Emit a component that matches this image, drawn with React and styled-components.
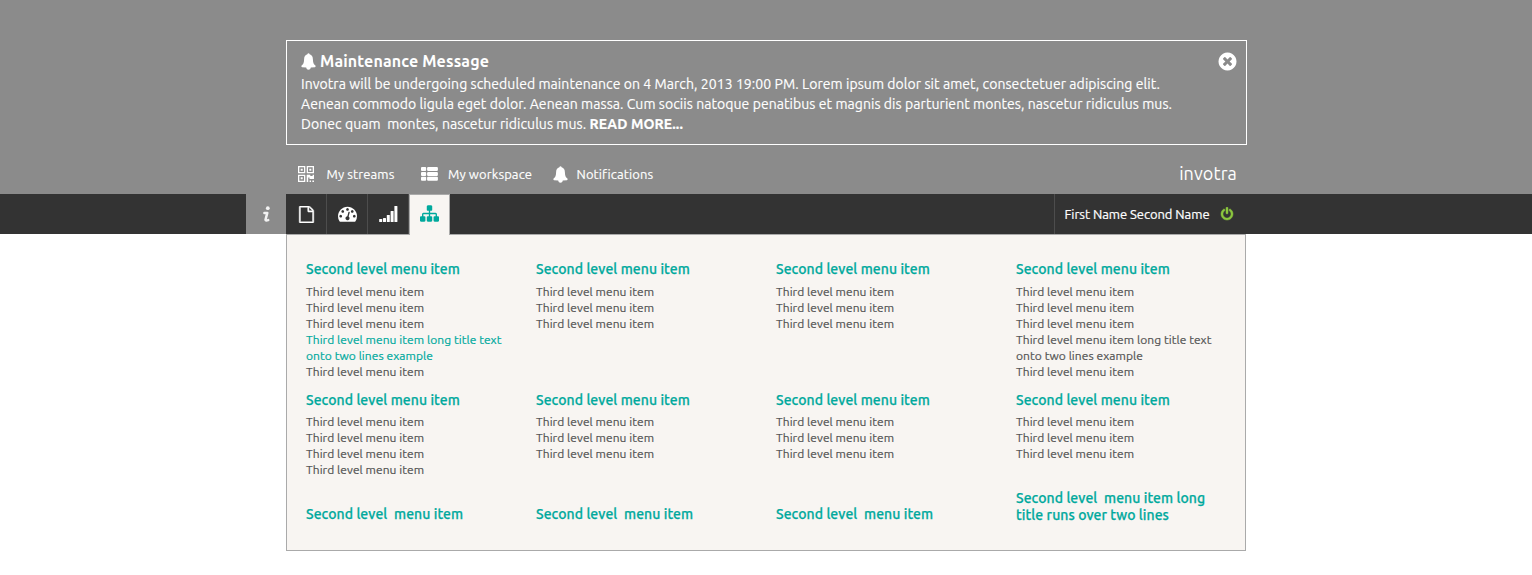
import React from "react";
import styled, { createGlobalStyle } from "styled-components";

const GlobalStyle = createGlobalStyle`
  * { box-sizing: border-box; }
  body { margin: 0; background: #fff; font-family: Ubuntu, "Noto Sans", sans-serif; }
  h2, h3, p, ul { margin: 0; padding: 0; font-weight: normal; }
  button { border: 0; padding: 0; background: none; color: inherit; font: inherit; }
`;

const Header = styled.header`
  height: 194px;
  padding-top: 40px;
  background: #8b8b8b;
  color: #fff;
`;
const Container = styled.div`
  width: 961px;
  margin-left: 286px;
`;
const Message = styled.section`
  display: flex;
  justify-content: space-between;
  height: 105px;
  padding: 10px 8px 0 14px;
  border: 1px solid #fff;
`;
const MessageTitle = styled.h2`
  display: flex;
  align-items: center;
  gap: 4px;
  height: 20px;
  margin-bottom: 3px;
  font-size: 16px;
  font-weight: 700;
  white-space: nowrap;
  letter-spacing: 0.14px;
`;
const MessageLine = styled.p`
  height: 20px;
  font-size: 14px;
  line-height: 20px;
  white-space: pre;
  letter-spacing: 0.065px;
  -webkit-text-stroke: 0.15px;
`;
const ReadMore = styled.strong`
  font-weight: 700;
  letter-spacing: 0.1px;
`;
const Close = styled.button`
  display: flex;
  align-self: flex-start;
`;
const QuickLinks = styled.nav`
  display: flex;
  align-items: center;
  height: 49px;
  padding: 9px 10px 0 12px;
`;
const QuickLink = styled.a`
  display: flex;
  align-items: center;
  gap: ${(p) => p.$gap}px;
  width: ${(p) => p.$width}px;
  font-size: 13px;
  line-height: 20px;
  white-space: nowrap;
  letter-spacing: 0.1px;
  -webkit-text-stroke: 0.15px;
`;
const Brand = styled.span`
  margin: -3px 0 0 auto;
  font-size: 18px;
  line-height: 20px;
  letter-spacing: 0.12px;
`;

const NavBar = styled.div`
  display: flex;
  height: 40px;
  padding-left: 246px;
  background: #333;
  color: #fff;
`;
const InfoTab = styled.button`
  display: flex;
  align-items: center;
  justify-content: center;
  width: 40px;
  background: #8b8b8b;
  color: #f2f2f2;
`;
const Tab = styled.button`
  display: flex;
  align-items: center;
  justify-content: center;
  width: 41px;
  height: ${(p) => (p.$active ? 41 : 40)}px;
  padding-bottom: ${(p) => p.$lift || 0}px;
  border-right: 1px solid ${(p) => (p.$active ? "#aaa" : "#4d4d4d")};
  ${(p) => p.$active && `
    position: relative;
    background: #f8f5f2;
    color: #00a99d;
    border-left: 1px solid #aaa;
    border-top: 1px solid #aaa;
  `}
`;
const User = styled.div`
  display: flex;
  align-items: center;
  justify-content: space-between;
  width: 192px;
  margin-left: 604px;
  padding: 0 12px 0 9.5px;
  border-left: 1px solid #4d4d4d;
  font-size: 13px;
  white-space: nowrap;
  letter-spacing: -0.04px;
  -webkit-text-stroke: 0.2px;
  svg { color: #8cc63f; }
`;

const Panel = styled.main`
  display: grid;
  grid-template-columns: 230px 240px 240px 229px;
  grid-template-rows: 131px 98px 59px;
  width: 960px;
  height: 317px;
  margin-left: 286px;
  padding: 26px 0 0 19px;
  border: 1px solid #aaa;
  background: #f8f5f2;
`;
const Group = styled.section`
  align-self: ${(p) => (p.$bottom ? "end" : "start")};
  padding-bottom: ${(p) => p.$bottom || 0}px;
`;
const GroupTitle = styled.h3`
  color: #00a99d;
  font-size: 14px;
  font-weight: 500;
  line-height: 17px;
  white-space: pre;
  letter-spacing: 0.07px;
  -webkit-text-stroke: 0.25px;
`;
const Items = styled.ul`
  list-style: none;
  padding-top: ${(p) => p.$top}px;
`;
const Item = styled.li`
  color: ${(p) => (p.$active ? "#00a99d" : "#555")};
  font-size: 12px;
  line-height: 16px;
  white-space: pre;
  letter-spacing: 0.06px;
  -webkit-text-stroke: 0.2px;
`;

const Fa = ({ size, d, stroke = 0 }) => (
  <svg width={size} height={size} viewBox="0 0 1792 1792" fill="currentColor" stroke="currentColor" strokeWidth={stroke}><path d={d} /></svg>
);
const POWER = "M1664 896q0 156-61 298t-164 245-245 164-298 61-298-61-245-164-164-245-61-298q0-182 80.5-343t226.5-270q43-32 95.5-25t83.5 50q32 42 24.5 94.5t-49.5 84.5q-98 74-151.5 181t-53.5 228q0 104 40.5 198.5t109.5 163.5 163.5 109.5 198.5 40.5 198.5-40.5 163.5-109.5 109.5-163.5 40.5-198.5q0-121-53.5-228t-151.5-181q-42-32-49.5-84.5t24.5-94.5q31-43 84-50t95 25q146 109 226.5 270t80.5 343zm-640-768v640q0 52-38 90t-90 38-90-38-38-90v-640q0-52 38-90t90-38 90 38 38 90z";
const CLOSE = "M1277 1122q0-26-19-45l-181-181 181-181q19-19 19-45 0-27-19-46l-90-90q-19-19-46-19-26 0-45 19l-181 181-181-181q-19-19-45-19-27 0-46 19l-90 90q-19 19-19 46 0 26 19 45l181 181-181 181q-19 19-19 45 0 27 19 46l90 90q19 19 46 19 26 0 45-19l181-181 181 181q19 19 45 19 27 0 46-19l90-90q19-19 19-46zm387-226q0 209-103 385.5t-279.5 279.5-385.5 103-385.5-103-279.5-279.5-103-385.5 103-385.5 279.5-279.5 385.5-103 385.5 103 279.5 279.5 103 385.5z";
const SITEMAP = "M1792 1248v320q0 40-28 68t-68 28h-320q-40 0-68-28t-28-68v-320q0-40 28-68t68-28h96v-192h-512v192h96q40 0 68 28t28 68v320q0 40-28 68t-68 28h-320q-40 0-68-28t-28-68v-320q0-40 28-68t68-28h96v-192h-512v192h96q40 0 68 28t28 68v320q0 40-28 68t-68 28h-320q-40 0-68-28t-28-68v-320q0-40 28-68t68-28h96v-192q0-52 38-90t90-38h512v-192h-96q-40 0-68-28t-28-68v-320q0-40 28-68t68-28h320q40 0 68 28t28 68v320q0 40-28 68t-68 28h-96v192h512q52 0 90 38t38 90v192h96q40 0 68 28t28 68z";
const GAUGE = "M384 1152q0-53-37.5-90.5t-90.5-37.5-90.5 37.5-37.5 90.5 37.5 90.5 90.5 37.5 90.5-37.5 37.5-90.5zm192-448q0-53-37.5-90.5t-90.5-37.5-90.5 37.5-37.5 90.5 37.5 90.5 90.5 37.5 90.5-37.5 37.5-90.5zm428 481l101-382q6-26-7.5-48.5t-38.5-29.5-48 6.5-30 39.5l-101 382q-60 5-107 43.5t-63 98.5q-20 77 20 146t117 89 146-20 89-117q16-60-6-117t-72-91zm660-33q0-53-37.5-90.5t-90.5-37.5-90.5 37.5-37.5 90.5 37.5 90.5 90.5 37.5 90.5-37.5 37.5-90.5zm-640-640q0-53-37.5-90.5t-90.5-37.5-90.5 37.5-37.5 90.5 37.5 90.5 90.5 37.5 90.5-37.5 37.5-90.5zm448 192q0-53-37.5-90.5t-90.5-37.5-90.5 37.5-37.5 90.5 37.5 90.5 90.5 37.5 90.5-37.5 37.5-90.5zm320 448q0 261-141 483-19 29-54 29h-1402q-35 0-54-29-141-221-141-483 0-182 71-348t191-286 286-191 348-71 348 71 286 191 191 286 71 348z";
const FILE = "M1596 380q28 28 48 76t20 88v1152q0 40-28 68t-68 28h-1344q-40 0-68-28t-28-68v-1600q0-40 28-68t68-28h896q40 0 88 20t76 48zm-444-244v376h376q-10-29-22-41l-313-313q-12-12-41-22zm384 1528v-1024h-416q-40 0-68-28t-28-68v-416h-768v1536h1280z";

const InfoIcon = () => (
  <svg width="7" height="17" viewBox="0 0 7 17" fill="none" stroke="currentColor" strokeLinecap="round" strokeLinejoin="round">
    <circle cx="4.8" cy="2.2" r="1.9" fill="currentColor" stroke="none" />
    <path d="M1.4 6.9H4.3L2.5 13.7Q2.5 15 5.2 14.1" strokeWidth="2.5" />
  </svg>
);
const Bell = () => (
  <svg width="15" height="17" viewBox="0 0 15 17" fill="currentColor">
    <path d="M7.5 0.3C8.1 0.3 8.5 0.7 8.6 1.3C10.8 1.9 11.8 3.6 11.9 6.2C12 9.5 12.6 11.2 14.4 12.6C14.8 13 14.7 14 14 14.2L9.8 14.5C9.5 16 8.7 16.7 7.5 16.7S5.5 16 5.2 14.5L1 14.2C0.3 14 0.2 13 0.6 12.6C2.4 11.2 3 9.5 3.1 6.2C3.2 3.6 4.2 1.9 6.4 1.3C6.5 0.7 6.9 0.3 7.5 0.3Z" />
  </svg>
);
const QrCode = () => (
  <svg width="16" height="16" viewBox="0 0 16 16" fill="currentColor">
    <path fillRule="evenodd" d="M0 0H7.3V7.3H0ZM1.3 1.3V6H6V1.3ZM8.7 0H16V7.3H8.7ZM10 1.3V6H14.7V1.3ZM0 8.7H7.3V16H0ZM1.3 10V14.7H6V10ZM2.7 2.7H4.7V4.7H2.7ZM11.3 2.7H13.3V4.7H11.3ZM2.7 11.3H4.7V13.3H2.7Z" />
    <path d="M8.7 8.7H12.3V10H14.6V8.7H16V13H11.5V11.6H10.2V16H8.7ZM11.6 14.6H13V16H11.6ZM14.4 14.6H16V16H14.4Z" />
  </svg>
);
const ThList = () => (
  <svg width="17" height="14" viewBox="0 0 17 14" fill="currentColor">
    {[0, 4.9, 9.8].map((y) => (
      <g key={y}><rect x="0" y={y} width="5.2" height="4" rx="1" /><rect x="6.1" y={y} width="10.8" height="4" rx="1" /></g>
    ))}
  </svg>
);
const Signal = () => (
  <svg width="19" height="16" viewBox="0 0 19 16" fill="currentColor">
    {[3, 4, 7, 11, 16].map((h, i) => (
      <rect key={h} x={0.2 + i * 3.8} y={16 - h} width="3" height={h} rx="0.5" />
    ))}
  </svg>
);

const THIRD = "Third level menu item";
const LONG = ["Third level menu item long title text", "onto two lines example"];
const SECOND = "Second level menu item";
const rows = [
  [
    [THIRD, THIRD, THIRD, ...LONG, THIRD],
    [THIRD, THIRD, THIRD],
    [THIRD, THIRD, THIRD],
    [THIRD, THIRD, THIRD, ...LONG, THIRD],
  ],
  [
    [THIRD, THIRD, THIRD, THIRD],
    [THIRD, THIRD, THIRD],
    [THIRD, THIRD, THIRD],
    [THIRD, THIRD, THIRD],
  ],
];
const footer = [
  "Second level  menu item",
  "Second level  menu item",
  "Second level  menu item",
  "Second level  menu item long\ntitle runs over two lines",
];

export default function App() {
  return (
    <>
      <GlobalStyle />
      <Header>
        <Container>
          <Message>
            <div>
              <MessageTitle><Bell />Maintenance Message</MessageTitle>
              <MessageLine>Invotra will be undergoing scheduled maintenance on 4 March, 2013 19:00 PM. Lorem ipsum dolor sit amet, consectetuer adipiscing elit.</MessageLine>
              <MessageLine>Aenean commodo ligula eget dolor. Aenean massa. Cum sociis natoque penatibus et magnis dis parturient montes, nascetur ridiculus mus.</MessageLine>
              <MessageLine>{"Donec quam  montes, nascetur ridiculus mus. "}<ReadMore>READ MORE...</ReadMore></MessageLine>
            </div>
            <Close aria-label="Close"><Fa size={21} d={CLOSE} /></Close>
          </Message>
          <QuickLinks>
            <QuickLink $gap={12.5} $width={123}><QrCode />My streams</QuickLink>
            <QuickLink $gap={10} $width={132}><ThList />My workspace</QuickLink>
            <QuickLink $gap={8.5} $width={120}><Bell />Notifications</QuickLink>
            <Brand>invotra</Brand>
          </QuickLinks>
        </Container>
      </Header>
      <NavBar>
        <InfoTab aria-label="Information"><InfoIcon /></InfoTab>
        <Tab aria-label="Pages"><Fa size={17} d={FILE} stroke={50} /></Tab>
        <Tab aria-label="Dashboard" $lift={2}><Fa size={19} d={GAUGE} /></Tab>
        <Tab aria-label="Statistics"><Signal /></Tab>
        <Tab aria-label="Site map" $active $lift={3}><Fa size={19} d={SITEMAP} /></Tab>
        <User>First Name Second Name<Fa size={14} d={POWER} stroke={60} /></User>
      </NavBar>
      <Panel>
        {rows.map((row, r) => row.map((items, c) => (
          <Group key={`${r}-${c}`}>
            <GroupTitle>{SECOND}</GroupTitle>
            <Items $top={r === 0 ? 6 : 5}>
              {items.map((text, i) => (
                <Item key={i} $active={r === 0 && c === 0 && (i === 3 || i === 4)}>{text}</Item>
              ))}
            </Items>
          </Group>
        )))}
        {footer.map((text, c) => (
          <Group key={c} $bottom={c < 3 ? 26 : 25}><GroupTitle>{text}</GroupTitle></Group>
        ))}
      </Panel>
    </>
  );
}
